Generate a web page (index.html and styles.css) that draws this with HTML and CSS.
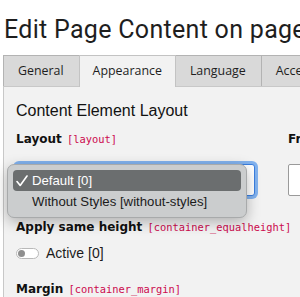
FILE: index.html
```html
<!DOCTYPE html>
<html lang="en">
<head>
    <meta charset="UTF-8">
    <meta name="viewport" content="width=device-width, initial-scale=1.0">
    <title>Edit Page Content</title>
    <link rel="stylesheet" href="styles.css">
</head>
<body>

<h1 class="page-title">Edit Page Content on page "Home"</h1>

<ul class="tabs">
    <li class="tab">General</li>
    <li class="tab active">Appearance</li>
    <li class="tab">Language</li>
    <li class="tab">Access</li>
</ul>

<div class="panel">
    <h2 class="section-title">Content Element Layout</h2>

    <div class="row">
        <div class="field field-layout">
            <label class="field-label">Layout <code>[layout]</code></label>
            <div class="select-wrap">
                <div class="select focused">Default [0]</div>
                <!-- open native dropdown -->
                <ul class="menu">
                    <li class="menu-item selected">
                        <svg class="check" width="12" height="12" viewBox="0 0 12 12">
                            <path d="M1 6.5 L4.2 10.5 L11 1" fill="none" stroke="#fff" stroke-width="1.6" stroke-linecap="round" stroke-linejoin="round"/>
                        </svg>
                        Default [0]
                    </li>
                    <li class="menu-item">Without Styles [without-styles]</li>
                </ul>
            </div>
        </div>
        <div class="field">
            <label class="field-label">Frame Class <code>[frame_class]</code></label>
            <div class="input"></div>
        </div>
    </div>

    <div class="field field-equal">
        <label class="field-label">Apply same height <code>[container_equalheight]</code></label>
        <div class="toggle-row">
            <span class="toggle"><span class="knob"></span></span>
            <span>Active [0]</span>
        </div>
    </div>

    <div class="field field-margin">
        <label class="field-label">Margin <code>[container_margin]</code></label>
    </div>
</div>

</body>
</html>
```

FILE: styles.css
```css
html, body {
    overflow: hidden;
}
body {
    margin: 0;
    background-color: #fff;
    color: #1e1e1e;
    font-family: "Liberation Sans", Arial, sans-serif;
}
.page-title {
    margin: 15px 0 0 4px;
    font-family: Roboto, sans-serif;
    font-weight: normal;
    font-size: 25px;
    letter-spacing: 0.3px;
    line-height: 30px;
    white-space: nowrap;
}
.tabs {
    display: flex;
    list-style: none;
    margin: 10px 0 0 3px;
    padding: 0;
    position: relative;
    z-index: 1;
    white-space: nowrap;
}
.tab {
    height: 30px;
    line-height: 30px;
    padding: 0 15px 0 14px;
    background-color: #d9d9d9;
    border: 1px solid #b3b3b3;
    border-bottom: none;
    margin-right: -1px;
    font-family: "Open Sans", sans-serif;
    font-size: 12.4px;
    color: #1e1e1e;
}
.tab.active {
    background-color: #f2f2f2;
    height: 31px;
    padding: 0 13px;
    margin-bottom: -1px;
    border-color: #c3c3c3;
    z-index: 2;
}
.panel {
    width: 700px;
    margin-left: 3px;
    background-color: #f2f2f2;
    border: 1px solid #c8c8c8;
    padding: 14px 12px 40px 12px;
}
.section-title {
    margin: 0;
    font-weight: normal;
    font-size: 16px;
    line-height: 20px;
    color: #111;
}
.row {
    display: grid;
    grid-template-columns: 239px 240px;
    column-gap: 33px;
    margin-top: 9px;
}
.field-label {
    display: block;
    font-family: "DejaVu Sans", Verdana, sans-serif;
    font-weight: bold;
    font-size: 12px;
    line-height: 18px;
    color: #111;
    white-space: nowrap;
}
.field-label code {
    font-family: "DejaVu Sans Mono", monospace;
    font-weight: normal;
    font-size: 10.4px;
    color: #cc0a4e;
    margin-left: 1px;
}
.select-wrap {
    position: relative;
    margin-top: 16px;
}
.select {
    height: 32px;
    box-sizing: border-box;
    border: 1px solid #3b7fe0;
    border-radius: 3px;
    background-color: #fff;
    padding: 0 10px;
    line-height: 30px;
    font-size: 14px;
}
.select.focused {
    box-shadow: 0 0 0 3px #82b2ee;
}
.input {
    margin-top: 16px;
    height: 32px;
    box-sizing: border-box;
    background-color: #fff;
    border: 1px solid #9a9a9a;
    border-radius: 2px;
}
.menu {
    position: absolute;
    left: -9px;
    top: 0;
    width: 240px;
    box-sizing: border-box;
    margin: 0;
    padding: 5px 5px;
    list-style: none;
    background-color: #cbcdce;
    border: 1px solid #a8aaab;
    border-radius: 7px;
    box-shadow: 0 4px 14px rgba(0, 0, 0, 0.28);
    z-index: 5;
}
.menu-item {
    display: flex;
    align-items: center;
    height: 21px;
    padding-left: 19px;
    font-size: 13.2px;
    color: #1b1b1b;
    border-radius: 4px;
    white-space: nowrap;
    position: relative;
}
.menu-item.selected {
    background-color: #6b6e6f;
    color: #fff;
}
.check {
    position: absolute;
    left: 3px;
    top: 5px;
}
.field-equal {
    margin-top: 22px;
}
.toggle-row {
    display: flex;
    align-items: center;
    gap: 7px;
    margin-top: 8px;
    height: 18px;
    font-size: 14px;
    color: #1b1b1b;
}
.toggle {
    position: relative;
    width: 23px;
    height: 11px;
    box-sizing: border-box;
    border: 1px solid #b9b9b9;
    border-radius: 6px;
    background-color: #fff;
}
.knob {
    position: absolute;
    left: 1px;
    top: 1px;
    width: 7px;
    height: 7px;
    border-radius: 50%;
    background-color: #8f8f8f;
}
.field-margin {
    margin-top: 18px;
}
```
